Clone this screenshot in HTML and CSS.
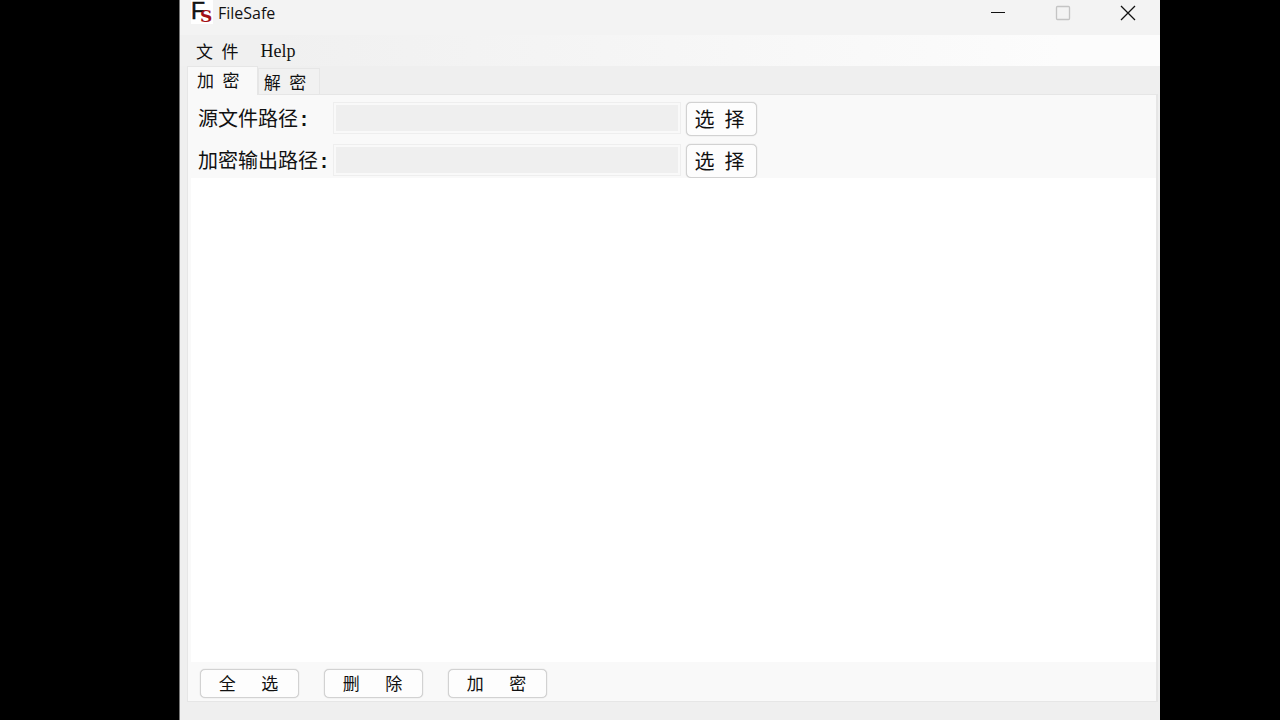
FILE: index.html
```html
<!DOCTYPE html>
<html lang="zh-CN">
<head>
    <meta charset="utf-8">
    <title>FileSafe</title>
    <link rel="stylesheet" href="styles.css">
</head>
<body>
<div class="window">
    <header class="titlebar">
        <svg class="logo" width="22" height="24" viewBox="0 0 22 24">
            <rect width="22" height="24" fill="#fff"/>
            <text class="logo-f" x="0" y="19">F</text>
            <text class="logo-s" x="9" y="22">S</text>
        </svg>
        <h1>FileSafe</h1>
        <div class="window-controls">
            <button type="button" aria-label="Minimize">
                <svg width="16" height="16" viewBox="0 0 16 16"><path d="M1 7.5h14" stroke="#111" fill="none"/></svg>
            </button>
            <button type="button" aria-label="Maximize" disabled>
                <svg width="16" height="16" viewBox="0 0 16 16"><rect x="1.5" y="1.5" width="13" height="13" rx="1" stroke="#c4c4c4" stroke-width="1.3" fill="none"/></svg>
            </button>
            <button type="button" aria-label="Close">
                <svg width="16" height="16" viewBox="0 0 16 16"><path d="M1 1l14 14M15 1l-14 14" stroke="#111" stroke-width="1.3" fill="none"/></svg>
            </button>
        </div>
    </header>

    <nav class="menu">
        <button type="button">文&ensp;件</button>
        <button type="button" class="menu-help">Help</button>
    </nav>

    <main class="content">
        <div class="tabs" role="tablist">
            <button type="button" role="tab" class="tab active" aria-selected="true">加&ensp;密</button>
            <button type="button" role="tab" class="tab" aria-selected="false">解&ensp;密</button>
        </div>
        <form class="panel">
            <div class="paths">
                <label for="source">源文件路径<b>:</b></label>
                <input type="text" id="source" readonly>
                <button type="button" class="btn">选&ensp;择</button>
                <label for="output">加密输出路径<b>:</b></label>
                <input type="text" id="output" readonly>
                <button type="button" class="btn">选&ensp;择</button>
            </div>
            <div class="file-list"></div>
            <div class="actions">
                <button type="button" class="btn">全&ensp;&ensp;&ensp;选</button>
                <button type="button" class="btn">删&ensp;&ensp;&ensp;除</button>
                <button type="button" class="btn">加&ensp;&ensp;&ensp;密</button>
            </div>
        </form>
    </main>
</div>
</body>
</html>
```
FILE: styles.css
```css
*{
    box-sizing: border-box;
}
html,body{
    margin: 0;
    padding: 0;
    background: #000;
    color: #111;
    font-family: "Noto Sans CJK SC", sans-serif;
}
body{
    padding: 0 120px 0 179px;
}
button,
input{
    font-family: inherit;
    color: inherit;
    margin: 0;
    padding: 0;
}

.window{
    display: flex;
    flex-direction: column;
    min-height: 100vh;
    background: #efefef;
    border-left: 1px solid #777;
}

.titlebar{
    display: flex;
    height: 35px;
    padding-left: 11px;
    background: #f3f3f3;
}
.titlebar h1{
    flex: 1;
    margin: 0;
    padding-left: 5px;
    font-family: "Open Sans", sans-serif;
    font-size: 16px;
    font-weight: normal;
    line-height: 26px;
}
.logo{
    overflow: visible;
}
.logo-f{
    font: 23px "Liberation Sans", sans-serif;
    fill: #111;
    stroke: #111;
    stroke-width: .5px;
}
.logo-s{
    font: bold 17px "DejaVu Serif", serif;
    fill: #a31016;
}
.window-controls{
    display: flex;
}
.window-controls button{
    width: 65px;
    height: 26px;
    background: none;
    border: none;
}
.window-controls svg{
    display: block;
    margin: 0 auto;
}

.menu{
    display: flex;
    gap: 22px;
    height: 31px;
    padding: 1px 16px 0;
    background: linear-gradient(to right, #f0f0f0 10%, #fcfcfc 90%);
}
.menu button{
    background: none;
    border: none;
    font-size: 17px;
    line-height: 28px;
}
.menu .menu-help{
    font-family: "Liberation Serif", serif;
    font-size: 18px;
}

.content{
    flex: 1;
    display: flex;
    flex-direction: column;
    padding: 0 2px 18px 7px;
}
.tabs{
    display: flex;
    align-items: flex-end;
    height: 28px;
}
.tab{
    width: 62px;
    height: 26px;
    border: 1px solid #e6e6e6;
    border-bottom: none;
    background: #f1f1f1;
    font-size: 17px;
    line-height: 24px;
    padding-right: 8px;
}
.tab.active{
    width: 71px;
    height: 29px;
    margin-bottom: -1px;
    padding: 0 9px 3px;
    background: #f9f9f9;
    text-align: left;
    z-index: 1;
}

.panel{
    flex: 1;
    display: flex;
    flex-direction: column;
    background: #f9f9f9;
    border: 1px solid #e6e6e6;
    border-width: 1px 2px 1px 1px;
}
.paths{
    display: grid;
    grid-template-columns: 130px 348px 71px;
    column-gap: 5px;
    row-gap: 8px;
    padding: 7px 10px 0;
}
.paths label{
    font-size: 20px;
    line-height: 32px;
    white-space: nowrap;
}
.paths label b{
    font-family: "Liberation Mono", monospace;
    line-height: 20px;
}
.paths input{
    width: 100%;
    height: 32px;
    background: #efefef;
    background-clip: content-box;
    border: 1px solid #eee;
    padding: 2px;
}
.btn{
    background: #fdfdfd;
    border: 1px solid #d2d2d2;
    border-radius: 5px;
    box-shadow: 0 0 1px #bbb;
}
.paths .btn{
    height: 34px;
    font-size: 20px;
    line-height: 30px;
    padding: 0 4px 1px 0;
}

.file-list{
    flex: 1;
    margin-left: 3px;
    background: #fff;
}
.actions{
    display: flex;
    gap: 25px;
    padding: 7px 12px 3px;
}
.actions .btn{
    width: 99px;
    height: 29px;
    font-size: 17px;
    line-height: 25px;
    padding: 0 2px 2px 0;
}
```
